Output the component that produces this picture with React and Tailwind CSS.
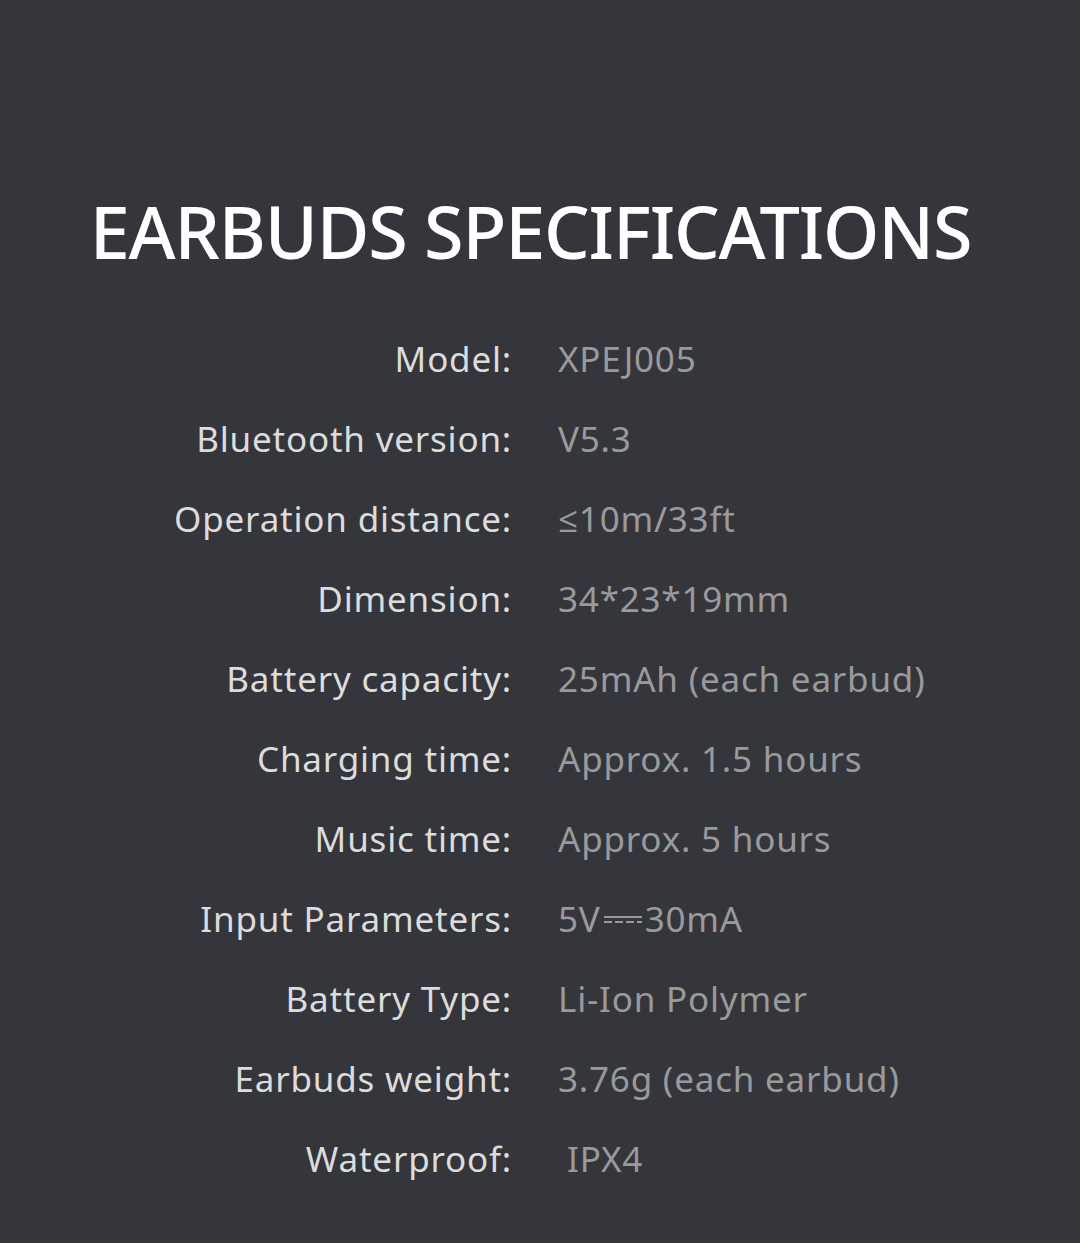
import React from "react";

const rows = [
  ["Model:", "XPEJ005"],
  ["Bluetooth version:", "V5.3"],
  ["Operation distance:", "≤10m/33ft"],
  ["Dimension:", "34*23*19mm"],
  ["Battery capacity:", "25mAh (each earbud)"],
  ["Charging time:", "Approx. 1.5 hours"],
  ["Music time:", "Approx. 5 hours"],
  ["Input Parameters:", "DC"],
  ["Battery Type:", "Li-Ion Polymer"],
  ["Earbuds weight:", "3.76g (each earbud)"],
  ["Waterproof:", "IPX4"],
];

function DC() {
  return (
    <span className="inline-flex items-center">
      5V
      <svg width="40" height="12" viewBox="0 0 40 12" className="mx-[2px]" style={{ marginTop: 2 }}>
        <line x1="1" y1="3" x2="39" y2="3" stroke="#9a9a9c" strokeWidth="2" />
        <line x1="1" y1="8" x2="39" y2="8" stroke="#9a9a9c" strokeWidth="2" strokeDasharray="8 3" />
      </svg>
      30mA
    </span>
  );
}

export default function App() {
  return (
    <div
      className="w-[1080px] h-[1243px] bg-[#34363b] flex flex-col items-center"
      style={{ fontFamily: '"Noto Sans", "Open Sans", sans-serif' }}
    >
      <h1 className="mt-[185px] mr-[19px] text-[72px] leading-[92px] text-white font-medium tracking-[-1.2px]">
        EARBUDS SPECIFICATIONS
      </h1>
      <div className="mt-[42px] w-full flex flex-col">
        {rows.map(([k, v]) => (
          <div key={k} className="flex h-[80px] items-center text-[35px] tracking-[0.8px]">
            <div className="w-[512px] text-right text-[#dcdcdc]">{k}</div>
            <div className={`text-[#9a9a9c] ${v === "IPX4" ? "pl-[55px]" : "pl-[46px]"}`}>
              {v === "DC" ? <DC /> : v}
            </div>
          </div>
        ))}
      </div>
    </div>
  );
}
